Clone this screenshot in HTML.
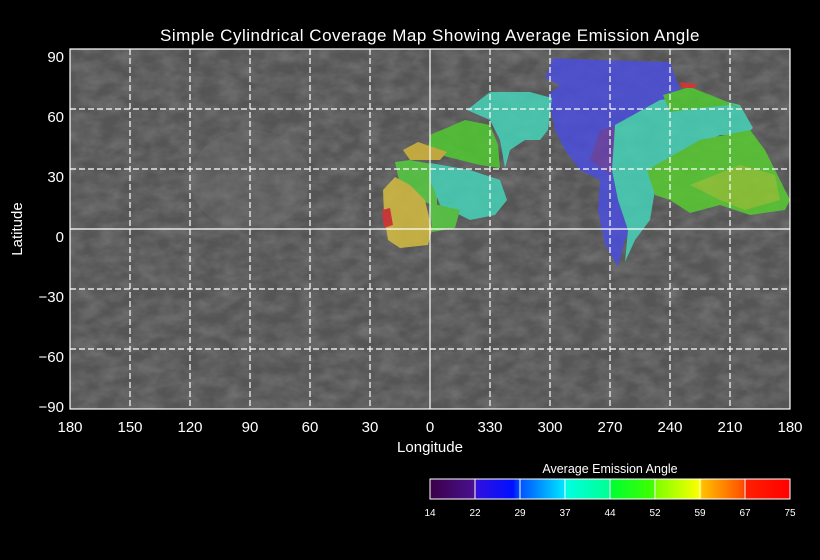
<!DOCTYPE html>
<html><head><style>
body{margin:0;background:#000;width:820px;height:560px;overflow:hidden}
svg{display:block}
text{font-family:"Liberation Sans",sans-serif;fill:#fff}
</style></head><body>
<svg width="820" height="560" viewBox="0 0 820 560">
<defs>
<filter id="n" x="0" y="0" width="100%" height="100%">
<feTurbulence type="fractalNoise" baseFrequency="0.05 0.08" numOctaves="3" seed="4"/>
<feColorMatrix type="matrix" values="0 0 0 0 0.3  0 0 0 0 0.3  0 0 0 0 0.3  0.7 0 0 0 -0.2"/>
</filter>
<linearGradient id="cb" x1="0" x2="1">
<stop offset="0" stop-color="#3a0048"/><stop offset="0.125" stop-color="#4a1090"/>
<stop offset="0.13" stop-color="#3010e0"/><stop offset="0.23" stop-color="#0010ff"/>
<stop offset="0.25" stop-color="#0050ff"/><stop offset="0.375" stop-color="#00e8ff"/>
<stop offset="0.38" stop-color="#00ffe0"/><stop offset="0.5" stop-color="#00ff90"/>
<stop offset="0.505" stop-color="#00ff30"/><stop offset="0.62" stop-color="#40ff00"/>
<stop offset="0.63" stop-color="#80ff00"/><stop offset="0.75" stop-color="#ffff00"/>
<stop offset="0.755" stop-color="#ffc000"/><stop offset="0.87" stop-color="#ff5000"/>
<stop offset="0.875" stop-color="#ff2000"/><stop offset="1" stop-color="#ff0000"/>
</linearGradient>
</defs>
<text x="430" y="41" font-size="17" text-anchor="middle" letter-spacing="0.5">Simple Cylindrical Coverage Map Showing Average Emission Angle</text>
<rect x="70" y="49" width="720" height="360" fill="#555"/>
<rect x="70" y="49" width="720" height="360" filter="url(#n)"/>
<ellipse cx="250" cy="180" rx="60" ry="50" fill="#777" opacity="0.25"/>
<g opacity="0.82">
<polygon fill="#4a4ee0" points="553,58 600,60 670,62 680,90 660,110 640,125 620,160 632,200 640,215 625,240 618,267 605,245 598,210 600,180 580,170 565,150 555,130 548,95 560,85 545,78"/>
<polygon fill="#6a40b0" points="600,130 640,120 620,160 610,175 590,160"/>
<polygon fill="#46d8bc" points="467,110 490,92 530,92 552,98 548,130 540,140 525,140 510,150 505,168 500,140 490,120"/>
<polygon fill="#50cc30" points="430,135 465,120 490,125 498,145 500,168 480,165 460,160 440,155 428,150"/>
<polygon fill="#d8b83a" points="403,150 418,142 447,152 440,160 410,160"/>
<polygon fill="#56d040" points="395,162 410,160 437,165 437,207 420,200 400,185"/>
<polygon fill="#46d8bc" points="430,163 470,170 500,180 507,200 495,215 470,220 440,205 430,180"/>
<polygon fill="#d8c040" points="383,190 395,177 410,185 425,200 432,230 428,245 400,248 388,240 384,215"/>
<polygon fill="#56d040" points="430,203 460,210 455,228 432,232"/>
<polygon fill="#e03030" points="382,210 390,208 393,225 384,228"/>
<polygon fill="#46d8bc" points="615,125 660,100 700,95 740,105 753,128 745,135 720,135 690,150 660,165 650,175 655,190 650,220 635,240 625,262 628,230 618,200 612,170"/>
<polygon fill="#50cc30" points="663,95 690,87 723,100 745,110 730,105 700,108 670,112"/>
<polygon fill="#e03030" points="680,82 697,84 695,88 682,88"/>
<polygon fill="#58d030" points="647,170 700,140 750,130 765,150 790,200 785,210 750,215 720,205 690,213 670,200 655,195"/>
<polygon fill="#90d030" points="690,185 740,165 775,175 780,200 745,210 720,200"/>
</g>
<g stroke="#fff" stroke-width="1.2" fill="none">
<g stroke-dasharray="6,3">
<path d="M130 49V409M190 49V409M250 49V409M310 49V409M370 49V409M490 49V409M550 49V409M610 49V409M670 49V409M730 49V409"/>
<path d="M70 109H790M70 169H790M70 289H790M70 349H790"/>
</g>
<path d="M430 49V409M70 229H790"/>
<rect x="70" y="49" width="720" height="360"/>
</g>
<g font-size="15" text-anchor="end">
<text x="64" y="62">90</text><text x="64" y="122">60</text><text x="64" y="182">30</text>
<text x="64" y="242">0</text><text x="64" y="302">−30</text><text x="64" y="362">−60</text><text x="64" y="412">−90</text>
</g>
<g font-size="15" text-anchor="middle">
<text x="70" y="432">180</text><text x="130" y="432">150</text><text x="190" y="432">120</text><text x="250" y="432">90</text><text x="310" y="432">60</text><text x="370" y="432">30</text><text x="430" y="432">0</text><text x="490" y="432">330</text><text x="550" y="432">300</text><text x="610" y="432">270</text><text x="670" y="432">240</text><text x="730" y="432">210</text><text x="790" y="432">180</text>
<text x="430" y="452">Longitude</text>
</g>
<text x="22" y="229" font-size="15" text-anchor="middle" transform="rotate(-90 22 229)">Latitude</text>
<text x="610" y="473" font-size="12.5" text-anchor="middle">Average Emission Angle</text>
<rect x="430" y="479" width="360" height="20" fill="url(#cb)" stroke="#fff" stroke-width="1"/>
<path d="M475 479V499M520 479V499M565 479V499M610 479V499M655 479V499M700 479V499M745 479V499" stroke="#fff" stroke-width="1"/>
<g font-size="10" text-anchor="middle">
<text x="430" y="516">14</text><text x="475" y="516">22</text><text x="520" y="516">29</text><text x="565" y="516">37</text><text x="610" y="516">44</text><text x="655" y="516">52</text><text x="700" y="516">59</text><text x="745" y="516">67</text><text x="790" y="516">75</text>
</g>
</svg>
</body></html>
